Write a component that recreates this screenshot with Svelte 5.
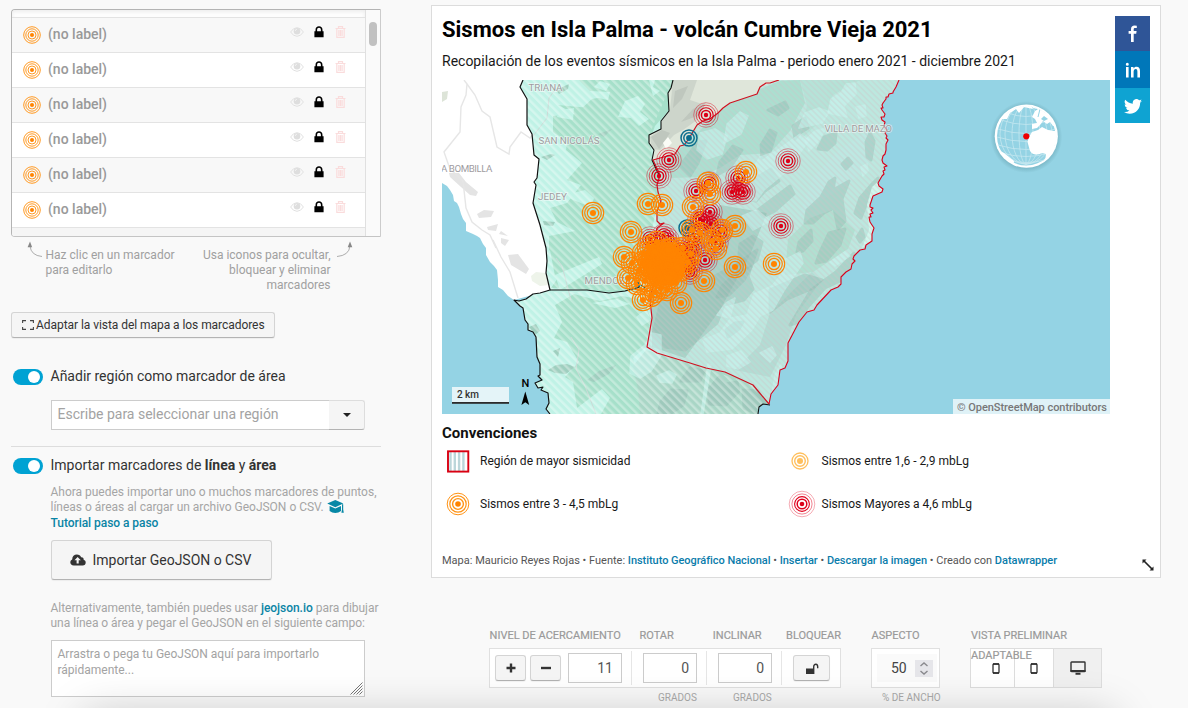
<script>
  const rows = [0, 1, 2, 3, 4, 5];

  const west = 'M523 80L520 87L527 99L527 125L532 134L534 155L539 159L537 178L534 182L536 185L533 203L540 225L546 248L547 261L546 273L550 290';
  const south = 'L540 293L533 294L526 299L519 301L514 300L520 306L523 308L525 320L528 324L528 330L533 332L536 337L537 357L540 364L540 375L538 376L542 380L535 383L538 388L543 387L541 390L548 393L549 403L546 409L550 414';
  const coastEast = '899 80L896 87L893 92L893 93L889 94L888 97L886 97L886 99L883 103L882 105L883 108L881 108L882 110L885 114L884 117L881 117L882 120L885 122L884 126L887 130L885 133L887 136L886 138L888 140L886 144L886 150L885 154L883 156L882 160L883 163L887 166L884 167L885 170L883 171L884 174L882 176L878 183L879 186L883 189L882 192L873 196L870 205L870 207L873 208L871 210L873 213L870 214L871 217L869 217L870 222L874 228L872 234L872 241L866 245L865 249L860 250L854 256L853 259L855 261L852 264L851 269L846 272L841 277L841 284L838 287L831 290L817 305L814 310L807 312L799 322L788 343L788 361L785 368L780 370L778 385L771 394L769 404';
  const fault = 'M779 80L770 83L766 83L760 87L757 94L730 103L723 108L718 113L710 119L703 121L697 125L688 140L684 145L680 146L675 154L660 158L653 160L660 175L657 185L658 192L661 201L657 211L657 221L660 224L664 223L657 228L655 240L660 265L652 290L650 300L652 318L647 347L657 353L690 363L706 368L725 372L753 385L769 404';
  const ridge = 'M673 80L671 88L668 93L669 111L661 121L661 129L649 135L649 143L654 150L652 160L659 175';
  const region = fault + 'L' + coastEast.split('L').reverse().join('L') + 'Z';

  const green = [
    'M576 80L676 80L669 110L655 126L650 140L652 157L660 180L655 215L640 290L610 292L578 289L551 288L560 275L572 270L549 250L549 236L575 231L557 222L550 208L567 203L581 185L567 180L582 163L566 150L567 142L553 132L553 116L575 114L558 105L590 108L604 96L574 91Z',
    'M581 109L592 99L614 95L640 100L643 87L624 82L658 80L660 110L646 128L632 120L625 113L616 118L606 108Z',
    'M555 305L574 294L600 301L622 296L643 300L651 318L646 347L633 358L638 375L620 414L578 414L573 382L565 377L579 362L567 342L554 338L562 322Z',
    'M549 245L560 238L577 248L563 256L592 266L580 275L555 276Z',
    'M628 377L646 365L660 386L654 414L616 414L620 394Z'
  ];
  const mint = [
    'M562 80L579 80L590 91L610 92L608 100L589 96L568 98Z',
    'M625 101L638 96L645 104L640 112L649 119L639 126L631 118L618 117Z',
    'M559 110L574 108L573 120L557 117Z',
    'M565 195L585 190L594 198L591 207L573 200Z',
    'M555 275L599 257L602 264L560 290Z',
    'M594 87L600 81L610 84L606 91Z',
    'M592 303L617 299L630 304L615 308Z',
    'M649 80L655 80L653 87L660 91L653 96Z',
    'M577 408L602 389L610 398L601 414L574 414Z'
  ];
  const hillsLight = [
    'M708 98L721 92L725 102L713 110Z',
    'M700 133L715 129L727 136L722 154L707 159L697 150Z',
    'M727 124L740 112L748 116L741 134L724 143Z',
    'M742 186L760 157L775 152L800 134L809 140L788 170L764 190L756 201L745 200Z',
    'M799 128L805 113L819 108L829 112L822 123Z',
    'M828 113L831 99L841 93L846 84L855 83L856 94L844 106L847 117Z',
    'M856 107L865 105L866 116L859 118Z',
    'M805 140L815 131L826 128L817 143L809 151Z',
    'M861 167L867 164L868 171L863 176Z',
    'M830 262L846 251L850 256L835 266Z',
    'M742 216L757 210L770 221L753 230Z',
    'M703 340L720 333L731 318L747 315L754 294L772 286L784 271L776 264L800 252L803 263L785 289L773 310L760 316L752 330L732 349L707 352Z',
    'M637 317L646 310L650 320L642 325Z',
    'M631 356L645 345L652 333L661 335L661 355L651 371L640 378L630 373Z',
    'M657 376L669 371L676 375L672 383L660 382Z',
    'M727 356L741 351L750 362L738 369L727 366Z',
    'M760 353L772 347L776 355L770 362Z',
    'M717 315L726 303L735 298L730 318Z',
    'M711 365L703 414L701 414L708 364Z',
    'M775 375L781 364L782 382L772 393Z'
  ];
  const hillsDark = [
    'M721 92L735 88L746 91L743 98L728 101L717 105Z',
    'M761 145L770 130L776 133L770 152L762 158Z',
    'M793 126L805 118L808 128L800 133L795 139Z',
    'M680 166L698 142L706 141L698 163L690 176Z',
    'M720 162L733 146L742 150L730 168L717 175Z',
    'M756 178L771 169L779 181L765 191L756 201L747 199Z',
    'M778 195L790 186L794 194L775 211L763 217L758 210Z',
    'M818 149L824 137L836 133L835 143L827 150Z',
    'M866 142L870 133L874 141L871 160L867 157Z',
    'M807 210L821 197L829 182L835 178L833 190L849 181L842 199L845 221L838 229L834 208L824 213L813 223L805 223Z',
    'M799 242L811 230L812 241L803 251L797 252Z',
    'M820 252L829 233L845 229L840 245L826 261L816 263Z',
    'M855 213L860 198L872 184L878 178L875 194L867 202L861 218Z',
    'M857 237L862 229L864 237L860 242Z',
    'M790 325L811 290L836 272L854 253L855 263L840 281L825 288L807 308L799 322Z',
    'M770 290L805 275L822 280L813 288L787 299L770 312Z',
    'M660 305L681 280L706 281L740 262L757 250L748 276L753 289L744 300L724 305L717 323L704 334L685 350L665 347L653 334Z',
    'M740 244L753 236L762 242L757 260L737 276Z',
    'M722 286L736 273L751 267L744 280L729 295L717 297Z',
    'M726 330L735 323L743 322L739 329L728 337Z',
    'M661 402L671 390L687 391L683 405L670 414L658 414Z',
    'M681 381L690 368L704 371L700 381Z',
    'M709 389L719 377L726 384L737 382L739 391L726 405L709 404Z',
    'M743 390L758 391L767 406L758 414L744 408Z',
    'M768 110L785 102L788 108L778 115Z',
    'M842 164L848 158L852 163L846 169Z'
  ];
  const leftHills = [
    'M541 157L551 154L555 155L547 160Z', 'M523 204L532 200L533 206L525 206Z', 'M548 370L556 365L567 364L575 367L566 374L555 373Z',
    'M587 380L599 371L616 365L609 374L594 382Z', 'M553 351L560 348L558 357Z', 'M620 169L626 166L623 170Z',
    'M529 327L536 324L540 331L535 335Z', 'M543 221L555 222L553 226L544 225Z', 'M556 90L569 84L568 89L559 94Z', 'M598 134L612 129L604 137Z'
  ];
  const greys = [
    'M449 173L459 173L466 182L478 192L476 196L470 195L461 187L450 177Z', 'M477 214L484 210L494 211L491 217L479 218Z', 'M487 227L498 224L496 231L488 230Z',
    'M501 238L509 240L505 246L501 243Z', 'M508 255L518 254L529 269L526 274L511 265Z', 'M501 231L508 236L499 234Z'
  ];
  const roads = [
    'M464 80L467 84L466 95L461 107L460 132L452 142L444 152L450 169L463 181L466 208L472 222L482 230L490 235L496 248',
    'M467 84L475 95L482 111L490 117L497 147L509 154L510 147L521 132L530 138L547 118L549 98L554 91',
    'M493 240L501 257L510 272L518 298'
  ];

  const red = [[706,115],[669,160],[659,176],[788,161],[781,226],[696,191],[738,178],[732,192],[739,190],[743,192],[709,184],[710,212],[700,219],[703,221],[711,224],[705,260],[688,265],[690,272],[650,239],[667,240],[695,238],[720,232],[680,250],[716,243],[686,255],[692,248],[664,236]];
  const orange = [[593,213],[631,232],[648,204],[662,205],[746,172],[708,183],[710,194],[693,207],[735,226],[722,230],[692,230],[700,233],[712,241],[774,264],[735,267],[704,281],[681,303],[643,300],[716,249],[624,257],[632,263],[628,278],[643,253],[691,254],[688,262],[683,248],[657,242],[655,292],[661,288],[637,284],[645,281],[651,296],[639,270],[648,247],[673,248],[676,283],[667,290],[643,262],[682,270]];
  for (let i = 0; i < 46; i++) {
    const r = 2.25 * Math.sqrt(i);
    const a = i * 2.399963;
    orange.push([663 + r * Math.cos(a), 264 + r * Math.sin(a)]);
  }
</script>

{#snippet target(x, y)}
  <g transform="translate({x} {y})" fill="none" stroke="#ff8400" stroke-width="1.15">
    <circle r="3" fill="#ff8400" stroke="none" /><circle r="5.7" stroke-width="1.2" /><circle r="8.3" /><circle r="10.7" />
  </g>
{/snippet}
{#snippet redTarget(x, y)}
  <g transform="translate({x} {y})" fill="none" stroke="#dc0018">
    <circle r="2.2" fill="#dc0018" stroke="none" /><circle r="4.6" stroke-width="1.5" /><circle r="7.2" stroke-width="1.1" /><circle r="9.8" stroke-width=".75" opacity=".8" /><circle r="12.3" stroke-width=".6" opacity=".7" />
  </g>
{/snippet}
{#snippet tealTarget(x, y)}
  <g transform="translate({x} {y})" fill="none" stroke="#0b6d8d" stroke-width="1.5">
    <circle r="2.9" fill="#0b6d8d" stroke="none" /><circle r="5.2" /><circle r="8" />
  </g>
{/snippet}
{#snippet unlock()}
  <svg width="14" height="13" viewBox="0 0 14 13"><path d="M1 6.5H8V5C8 2.8 9.1 1.4 10.9 1.4S13.4 2.7 13.4 4.8V6.2H12V4.8C12 3.7 11.7 2.9 10.8 2.9S9.4 3.6 9.4 5V12H1Z" fill="#333" /></svg>
{/snippet}

<div class="page">
  <aside>
    <div class="list">
      <div class="rows">
        <div class="sliver"></div>
        {#each rows as r}
          <div class="row" class:alt={r % 2 === 0}>
            <svg class="dot" width="18" height="18" viewBox="-9 -9 18 18" fill="none" stroke="#ff9a24" stroke-width="1"><circle r="2" fill="#ff8400" stroke="none" /><circle r="4" /><circle r="6.2" /><circle r="8.300" /></svg>
            <span class="name">(no label)</span>
            <svg class="eye" width="14" height="10" viewBox="0 0 14 10"><path d="M.6 5Q3.2 .7 7 .7T13.4 5Q10.8 9.3 7 9.3T.6 5Z" fill="none" stroke="#e0e0e0" /><circle cx="7" cy="4.2" r="3.3" fill="#dedede" /><path d="M5.2 4Q5.4 2.4 7 2.2" stroke="#f8f8f8" fill="none" stroke-width=".7" /></svg>
            <svg class="lock" width="10" height="12" viewBox="0 0 10 12"><path fill-rule="evenodd" d="M.4 5.2H1.5V3.9C1.5 1.5 2.9.3 5 .3S8.5 1.5 8.5 3.9V5.2H9.6V11.2H.4ZM3.1 5.2H6.9V3.9C6.9 2.5 6.2 1.8 5 1.8S3.1 2.5 3.1 3.9Z" fill="#000" /></svg>
            <svg class="trash" width="11" height="12" viewBox="0 0 11 12"><path d="M.5 2.5H10.5M3.5 2V.6H7.5V2M1.8 3V11.3H9.2V3M3.9 4V10M5.5 4V10M7.1 4V10" fill="none" stroke="#fadcdc" stroke-width="1.2" /></svg>
          </div>
        {/each}
        <div class="tail"></div>
      </div>
      <div class="track"><i></i></div>
    </div>

    <div class="hints">
      <svg width="20" height="18" viewBox="0 0 20 18"><path d="M7 5Q8 14.5 19 15.5" fill="none" stroke="#999" stroke-width=".8" /><path d="M7 .5L9.2 6.3H4.6Z" fill="#888" /></svg>
      <p class="h1">Haz clic en un marcador<br />para editarlo</p>
      <p class="h2">Usa iconos para ocultar,<br />bloquear y eliminar<br />marcadores</p>
      <svg class="arr2" width="20" height="18" viewBox="0 0 20 18"><path d="M14 5Q13 14.5 1 15.5" fill="none" stroke="#999" stroke-width=".8" /><path d="M14 .5L16.3 6.3H11.7Z" fill="#888" /></svg>
    </div>

    <button class="fit">
      <svg width="12" height="10" viewBox="0 0 12 10"><path d="M.6 3V.6H4M8 .6H11.4V3M11.4 7V9.4H8M4 9.4H.6V7" fill="none" stroke="#444" stroke-width="1.1" /></svg><span>Adaptar la vista del mapa a los marcadores</span>
    </button>

    <div class="switch s1"><span class="tog"></span><span class="txt">Añadir región como marcador de área</span></div>
    <div class="combo"><div class="field">Escribe para seleccionar una región</div><div class="drop"><i></i></div></div>
    <div class="rule"></div>
    <div class="switch s2"><span class="tog"></span><span class="txt">Importar marcadores de <b>línea</b> y <b>área</b></span></div>

    <p class="note n1"><span>Ahora puedes importar uno o muchos marcadores de puntos,</span><span>líneas o áreas al cargar un archivo GeoJSON o CSV. <svg width="17" height="13" viewBox="0 0 17 13"><path d="M8.3 0L16.3 3.6L8.3 7.2L.2 3.6Z M2.6 6L8.3 8.6L14 6V11Q11.5 13 8.3 13T2.6 11Z M15 4.2H16.2V9.5L16.8 12.8H14.4L15 9.5Z" fill="#0788a6" /></svg></span><b class="l3">Tutorial paso a paso</b></p>
    <button class="import">
      <svg width="16" height="12" viewBox="0 0 16 12"><path fill-rule="evenodd" d="M3.8 11.5C1.6 11.5.3 10.1.3 8.3C.3 6.9 1.1 5.9 2.2 5.4C2.2 2.4 4.2.5 6.9.5C8.9.5 10.5 1.6 11.1 3.2C12.9 3 14 4.4 13.6 5.8C15 6.2 15.7 7.2 15.7 8.5C15.7 10.2 14.5 11.5 12.7 11.5ZM7.6 3.1L4.5 6.3H6.6V9.4H8.7V6.3H10.8Z" fill="#333" /></svg><span>Importar GeoJSON o CSV</span>
    </button>
    <p class="note n2"><span>Alternativamente, también puedes usar <b>jeojson.io</b> para dibujar</span><span>una línea o área y pegar el GeoJSON en el siguiente campo:</span></p>
    <div class="area"><span>Arrastra o pega tu GeoJSON aquí para importarlo</span><span>rápidamente...</span>
      <svg width="13" height="13" viewBox="0 0 13 13"><path d="M.5 12.5L12.5 .5M3.5 12.5L12.5 3.5M6.5 12.5L12.5 6.5M9.5 12.5L12.5 9.5" stroke="#555" stroke-width=".8" /></svg>
    </div>
  </aside>

  <main>
    <section class="card">
      <div class="body">
        <h1><span>Sismos en Isla Palma - volcán Cumbre Vieja 2021</span></h1>
        <p class="intro"><span>Recopilación de los eventos sísmicos en la Isla Palma - periodo enero 2021 - diciembre 2021</span></p>
        <svg class="map" width="668" height="334" viewBox="442 80 668 334">
          <defs>
            <pattern id="hatch" width="5.6" height="5.6" patternUnits="userSpaceOnUse" patternTransform="rotate(-45)"><rect width="2.4" height="5.6" fill="#fff" opacity=".33" /></pattern>
            <pattern id="hatch2" width="4.2" height="4.2" patternUnits="userSpaceOnUse" patternTransform="rotate(-45)"><rect width="1.8" height="4.2" fill="#cfc6c8" opacity=".32" /></pattern>
            <clipPath id="island"><path d={west + south + 'L758 414L759 407L763 404L769 404L' + coastEast.split('L').reverse().join('L') + 'Z'} /></clipPath>
            <clipPath id="zone"><path d={region} /></clipPath>
            <radialGradient id="glow"><stop offset=".8" stop-color="#4b8490" stop-opacity=".45" /><stop offset="1" stop-color="#4b8490" stop-opacity="0" /></radialGradient>
            <clipPath id="disc"><circle cx="1026.3" cy="136.2" r="30" /></clipPath>
          </defs>
          <rect x="442" y="80" width="668" height="334" fill="#94d3e4" />
          <path d="M442 80H560V292L550 290L540 293L514 300L508 296L503 290L498 287V280L497 270L494 266L490 262L486 255V248L483 244L480 238L477 236L473 234L466 231L466 223L463 219L461 214L459 207L457 203L454 201L453 195L450 190L447 186L442 183Z" fill="#fff" />
          {#each greys as d}<path {d} fill="#e4e4e4" />{/each}
          <path d="M442 92L448 91L447 99L442 102Z" fill="#dde4d8" />
          <path d="M531 276L536 272L545 273L549 285L540 286L532 281Z" fill="#eef4ea" />
          <g fill="none" stroke="#e6e6e6" stroke-width="1.4">{#each roads as d}<path {d} />{/each}</g>
          <g clip-path="url(#island)" stroke-linejoin="round">
            <rect x="442" y="80" width="460" height="334" fill="#c0f2e6" />
            {#each green as d}<path {d} fill="#a6e0ca" />{/each}
            {#each mint as d}<path {d} fill="#c0f2e5" />{/each}
            {#each leftHills as d}<path {d} fill="#9fcfbf" />{/each}
            <path d="M646 350L690 363L725 372L753 385L769 404L758 414H640L638 390L633 366Z" fill="#a9d6c6" />
            <path d={region} fill="#bce8df" />
            <path d="M725 103L780 81L800 80L805 103L790 131L770 153L740 155L720 168L700 177L671 178L667 157L690 142L710 119Z" fill="#a6dccb" opacity=".75" />
            <path d="M800 80L860 80L833 95L826 116L800 140L807 105Z" fill="#b0dfd3" opacity=".6" />
            <path d="M652 290L720 205L767 213L750 255L720 310L685 358L652 347Z" fill="#9fcdc0" opacity=".8" />
            <path d="M770 313L812 272L821 281L796 315L786 345L770 377L735 370L760 345Z" fill="#b0d9d1" opacity=".8" />
            <g clip-path="url(#zone)">
              <path d="M813 177L838 151L869 130L875 151L864 172L846 186L811 207L798 218Z" fill="#bde8e2" />
              <path d="M788 239L810 218L832 210L855 230L848 249L813 272L785 275Z" fill="#a9dbc8" opacity=".6" />
            </g>
            {#each hillsDark as d}<path {d} fill="#8fb8ae" stroke="#8fb8ae" stroke-width="3" opacity=".42" />{/each}
            {#each hillsLight as d}<path {d} fill="#c9f4ee" stroke="#c9f4ee" stroke-width="1.500" opacity=".6" />{/each}
            <path d="M872 187L882 178V192L872 197L869 220L874 229L871 241L862 248L869 230L867 205Z" fill="#cff7ed" />
            <g fill="none" stroke="#cbd9d6" stroke-width="1"><path d="M527 144L547 118L549 98L554 91" /><path d="M556 258L562 266L571 300" /><path d="M571 337L579 350L576 369L585 386L596 414" /></g>
            <path d={west + 'L640 290L660 265L655 240L657 211L652 160L649 135L673 80Z'} fill="url(#hatch)" />
            <path d="M514 292H646L652 318L647 347L690 363L753 385L769 414H514Z" fill="url(#hatch)" />
            <path d={region} fill="url(#hatch2)" />
            <path d={ridge.replace('L659 175', '') + 'L660 158L675 154L680 146L688 140L697 125L703 121L718 113L730 103L757 94L760 87L779 80Z'} fill="#dfe6da" />
            <path d="M673 80L697 80L690 100L705 105L697 120L683 130L674 135L660 150L652 149L650 137L661 128L662 120L670 110Z" fill="#b9c0b8" opacity=".45" />
            <path d="M675 91L688 86L682 99L673 108ZM651 137L662 130L670 133L659 149ZM681 122L693 109L706 102L700 115Z" fill="#a9b1a9" opacity=".4" />
            <path d="M663 143L668 137L672 143L666 149Z" fill="#fafcf6" />
          </g>
          <g fill="none" stroke-linejoin="round">
            <path d={west + south} stroke="#111" stroke-width="1.2" />
            <path d="M550 290L570 290L587 290L609 293L625 291L640 287" stroke="#111" stroke-width="1.2" />
            <path d={ridge} stroke="#111" stroke-width="1.1" />
            <path d="M758 414L759 407L763 404L770 405" stroke="#111" stroke-width="1.1" />
            <path d={'M' + coastEast} stroke="#d9001b" stroke-width="1.1" />
            <path d={fault} stroke="#d0101f" stroke-width="1.2" />
          </g>
          <g class="lab">
            <text x="528.5" y="91" textLength="34">TRIANA</text>
            <text x="538.5" y="143.5" textLength="61">SAN NICOLÁS</text>
            <text x="538" y="199.5" textLength="29">JEDEY</text>
            <text x="441" y="172" textLength="51.5">A BOMBILLA</text>
            <text x="584.5" y="284" textLength="47">MENDOZA</text>
            <text x="824.5" y="131.5" textLength="67.5">VILLA DE MAZO</text>
          </g>
          {@render tealTarget(689, 138)}
          {@render tealTarget(687, 228)}
          {#each red as [x, y]}{@render redTarget(x, y)}{/each}
          {#each orange as [x, y]}{@render target(x, y)}{/each}
          <path d="M635 289L641 285L645 288M638 282L640 288" stroke="#0b6d8d" stroke-dasharray="2 1.5" fill="none" />
          <g>
            <circle cx="1026.3" cy="137" r="36" fill="url(#glow)" />
            <circle cx="1026.3" cy="136.2" r="31.6" fill="#fff" />
            <circle cx="1026.3" cy="136.2" r="29.3" fill="#94d3e4" />
            <g clip-path="url(#disc)">
              <g fill="none" stroke="#c4e7f0" stroke-width=".8">
                <ellipse cx="1026" cy="134" rx="7" ry="30" /><ellipse cx="1026" cy="134" rx="14" ry="30" /><ellipse cx="1026" cy="134" rx="21" ry="30" /><ellipse cx="1026" cy="134" rx="26" ry="30" /><path d="M1026 105V167" />
                <path d="M1008 113Q1026 120 1045 113M1001 120Q1026 129 1052 120M998 129Q1026 138 1056 129M997 137Q1026 146 1057 137M998 145Q1026 154 1056 145M1002 153Q1026 160 1050 153M1008 160Q1026 165 1045 160" />
              </g>
              <path d="M998 126L1001 119L1007 119L1010 113L1016 109L1019 113L1024 107L1033 109L1030 104L1012 105L999 114L994 126ZM997 149L1004 153L1014 161L1013 168L1000 159Z" fill="#fff" />
              <path d="M1027.500 142Q1028 137 1032 132L1038 130L1042 127L1048 130L1054 131L1059 130L1058 146L1049 160L1045 161L1046 154L1042 153Q1034 157 1030 151Z" fill="#fff" />
              <path d="M1032 129L1032 124L1037 123L1035 119L1032 117L1035 111L1040 108L1050 114L1056 126L1053 126L1050 122L1047 124L1043 121L1040 125L1037 128Z" fill="#fff" />
              <path d="M1041 119L1044 116L1048 119L1044 121Z" fill="#94d3e4" /><path d="M1040 109L1038 117" stroke="#94d3e4" />
            </g>
            <circle cx="1026.3" cy="136.3" r="3.1" fill="#ee0000" />
          </g>
          <rect x="452" y="387" width="57" height="16" fill="#fff" opacity=".75" /><rect x="452" y="402" width="57" height="1.8" fill="#2b2b2b" />
          <text x="457" y="398" class="scale" textLength="22">2 km</text>
          <text x="521.4" y="387" class="north">N</text>
          <path d="M525.3 391.5L529.2 405L525.3 402.3L521.4 405Z" fill="#000" />
          <rect x="953" y="399" width="157" height="15" fill="#fff" opacity=".7" />
          <text x="957" y="411" class="osm" textLength="150">© OpenStreetMap contributors</text>
        </svg>
        <h2><span>Convenciones</span></h2>
        <div class="legend">
          <div class="item"><svg width="28" height="28" viewBox="-14 -14 28 28"><rect x="-10" y="-9.5" width="20" height="20" fill="#fff" /><path d="M-7.5 -9V10M-3.2 -9V10M1.1 -9V10M5.4 -9V10" stroke="#bcd6da" stroke-width="2.4" /><rect x="-10" y="-9.7" width="20.3" height="20.3" fill="none" stroke="#d90012" stroke-width="1.9" /></svg><span>Región de mayor sismicidad</span></div>
          <div class="item"><svg width="28" height="28" viewBox="-14 -14 28 28" fill="none" stroke="#ffbf5c"><circle r="3" fill="#ffbf5c" stroke="none" /><circle r="5.300" stroke-width="1.400" /><circle r="8" stroke-width="1.300" /></svg><span>Sismos entre 1,6 - 2,9 mbLg</span></div>
          <div class="item"><svg width="28" height="28" viewBox="-14 -14 28 28" fill="none" stroke="#ff9314"><circle r="2.8" fill="#ff8400" stroke="none" /><circle r="5.4" stroke-width="1.4" /><circle r="8.2" stroke-width="1.2" /><circle r="10.8" stroke-width="1" /></svg><span>Sismos entre 3 - 4,5 mbLg</span></div>
          <div class="item wide-ring"><svg width="28" height="28" viewBox="-14 -14 28 28" fill="none" stroke="#e0001c"><circle r="2.3" fill="#dc0018" stroke="none" /><circle r="4.8" stroke-width="1.5" /><circle r="7.4" stroke-width="1.1" /><circle r="10.1" stroke-width=".7" opacity=".7" /><circle r="12.8" stroke-width=".6" opacity=".55" /></svg><span>Sismos Mayores a 4,6 mbLg</span></div>
        </div>
        <p class="foot"><span>Mapa: Mauricio Reyes Rojas • Fuente: <b>Instituto Geográfico Nacional</b> • <b>Insertar</b> • <b>Descargar la imagen</b> • Creado con <b>Datawrapper</b></span></p>
      </div>
      <div class="social">
        <div class="fb"><svg width="10" height="17" viewBox="0 0 10 17"><path d="M3 17V8.7H.6V6H3V4.3C3 1.7 4.4.5 6.5.5L8.8.7V3H7.2C6.1 3 5.7 3.5 5.7 4.4V6H8.6L8.2 8.7H5.7V17Z" fill="#fff" /></svg></div>
        <div class="li"><svg width="16" height="16" viewBox="0 0 16 16"><path d="M1 5H3.600V15.5H1ZM2.300 .7A1.5 1.5 0 1 1 2.300 3.700A1.500 1.500 0 1 1 2.300 .700ZM6 5H8.500V6.4C9.2 5.400 10.200 4.800 11.500 4.800C14.200 4.800 15 6.500 15 9.200V15.500H12.400V9.800C12.400 8.300 12 7.100 10.800 7.100C9.400 7.100 8.600 8.300 8.600 9.800V15.500H6Z" fill="#fff" /></svg></div>
        <div class="tw"><svg width="18" height="15" viewBox="0 0 24 20"><path d="M24 2.4a9.8 9.8 0 0 1-2.8.8A4.9 4.9 0 0 0 23.300 .5a9.900 9.900 0 0 1-3.100 1.200A4.900 4.900 0 0 0 11.800 6.200 14 14 0 0 1 1.700 1a4.900 4.900 0 0 0 1.500 6.600A4.900 4.900 0 0 1 1 7v.1a4.900 4.900 0 0 0 3.900 4.800 4.900 4.900 0 0 1-2.200.1 4.900 4.900 0 0 0 4.600 3.400A9.900 9.900 0 0 1 0 17.400 13.900 13.900 0 0 0 7.500 19.600c9.100 0 14-7.500 14-14V5A10 10 0 0 0 24 2.400Z" fill="#fff" /></svg></div>
      </div>
      <svg class="grip" width="12" height="12" viewBox="0 0 12 12"><path d="M2 2L10 10" stroke="#222" stroke-width="1.700" /><path d="M.5 .5H4.500L.5 4.500ZM11.500 11.500H7.500L11.500 7.500Z" fill="#222" /></svg>
    </section>

    <section class="controls">
      <div class="group">
        <div class="heads"><span class="c1">NIVEL DE ACERCAMIENTO</span><span class="c2">ROTAR</span><span class="c3">INCLINAR</span><span>BLOQUEAR</span></div>
        <div class="panel">
          <div class="cell z"><button class="sq"><svg width="10" height="10" viewBox="0 0 10 10"><path d="M5 .5V9.500M.5 5H9.500" stroke="#333" stroke-width="2.400" /></svg></button><button class="sq"><svg width="10" height="10" viewBox="0 0 10 10"><path d="M0 5H10" stroke="#333" stroke-width="2.400" /></svg></button><div class="num">11</div></div>
          <div class="cell"><div class="num">0</div></div>
          <div class="cell"><div class="num">0</div></div>
          <div class="cell last"><button class="sq wide">{@render unlock()}</button></div>
        </div>
        <div class="units"><span>GRADOS</span><span>GRADOS</span></div>
      </div>
      <div class="group aspect">
        <div class="heads"><span>ASPECTO</span></div>
        <div class="panel"><div class="spin"><span>50</span><div class="arrows"><svg width="18" height="17" viewBox="0 0 18 17"><path d="M5.500 6L9 3L12.500 6M5.500 11L9 14L12.500 11" fill="none" stroke="#8a8a8e" stroke-width="1.400" /></svg></div></div></div>
        <div class="units pct"><span>% DE ANCHO</span></div>
      </div>
      <div class="group preview">
        <div class="panel">
          <div class="dev"><svg width="8" height="11" viewBox="0 0 8 11"><rect x="1" y="1" width="6" height="9" rx=".8" fill="none" stroke="#222" stroke-width="1.200" /><path d="M1 1H7M1 10H7" stroke="#222" stroke-width="1.500" /></svg></div>
          <div class="dev m"><svg width="8" height="11" viewBox="0 0 8 11"><rect x="1" y="1" width="6" height="9" rx=".8" fill="none" stroke="#222" stroke-width="1.200" /><path d="M1 1H7M1 10H7" stroke="#222" stroke-width="1.500" /></svg></div>
          <div class="dev on"><svg width="16" height="14" viewBox="0 0 16 14"><rect x="1" y="1" width="14" height="9.500" rx=".6" fill="none" stroke="#333" stroke-width="1.400" /><path d="M.5 10H15.500M5.500 12.700H10.500" stroke="#333" stroke-width="1.900" /></svg></div>
        </div>
        <div class="over"><span>VISTA PRELIMINAR</span><span>ADAPTABLE</span></div>
      </div>
    </section>
  </main>
  <div class="shade"></div>
</div>

<style>
  :global(body) { margin: 0; background: #f9f9f9; overflow: hidden; }
  .page { position: relative; width: 1188px; height: 708px; overflow: hidden; display: flex; background: #f9f9f9; font-family: Roboto, "Liberation Sans", sans-serif; color: #333; box-sizing: border-box; }
  .page :global(*) { box-sizing: border-box; }
  p, h1, h2 { margin: 0; font-weight: 400; }
  svg { display: block; flex: none; }
  span { white-space: nowrap; }
  button { font: inherit; color: #333; padding: 0; margin: 0; display: flex; align-items: center; background: #f5f5f5; border: 1px solid #d4d4d4; border-bottom-color: #b3b3b3; border-radius: 3px; box-shadow: 0 1px 1px rgba(0,0,0,.05); }
  aside { width: 370px; margin-left: 11px; padding-top: 9px; flex: none; }

  .list { height: 228px; border: 1px solid #b4b4b4; border-bottom-color: #c4c4c4; border-right-color: #ccc; border-radius: 4px 0 0 4px; display: flex; overflow: hidden; box-shadow: inset 0 0 5px rgba(0,0,0,.1); }
  .rows { width: 354px; border-right: 1px solid #e0e0e0; background: #fff; overflow: hidden; }
  .sliver { height: 7px; box-shadow: inset 0 2px 4px rgba(0,0,0,.08); }
  .row { height: 35px; border-top: 1px solid #e3e3e3; display: flex; align-items: center; padding: 0 0 2px 11px; background: #fff; }
  .row.alt { background: #f8f8f8; }
  .dot { position: relative; top: .5px; }
  .name { font-size: 14px; margin-left: 7px; width: 242px; color: #999; font-weight: 500; }
  .eye, .lock, .trash { position: relative; top: -2px; }
  .lock { margin-left: 10px; } .trash { margin-left: 11px; }
  .tail { height: 12px; border-top: 1px solid #e3e3e3; background: #f5f5f5; }
  .track { flex: 1; padding: 12px 0 0 3px; background: #fafafa; }
  .track i { display: block; width: 8px; height: 24px; border-radius: 4px; background: #c1c1c1; }

  .hints { display: flex; height: 75px; padding: 4px 0 0 12px; font-size: 12px; line-height: 15px; color: #a0a0a0; }
  .hints p { padding-top: 7px; white-space: nowrap; }
  .h1 { width: 151px; margin-left: 2.500px; }
  .h2 { text-align: right; width: 134px; }
  .arr2 { margin-left: 5px; }

  .fit { width: 264px; height: 26px; padding-left: 9.500px; font-size: 12px; gap: 2.500px; letter-spacing: -.055px; }
  .switch { display: flex; align-items: center; height: 16px; padding-left: 2px; font-size: 14px; gap: 7.500px; }
  .s1 { margin-top: 31px; } .s2 { margin-top: 11px; }
  .txt { padding-bottom: 2px; }
  .tog { width: 30px; height: 16px; border-radius: 8px; background: #00a2d3; padding: 2px; flex: none; }
  .tog::after { content: ""; display: block; width: 12px; height: 12px; border-radius: 50%; background: #fff; margin-left: 13px; }
  .combo { margin: 15px 0 0 40px; width: 314px; height: 30px; display: flex; }
  .field { flex: 1; border: 1px solid #ccc; border-right: 0; background: #fff; color: #a3a3a3; font-size: 14px; line-height: 27px; padding-left: 5.500px; }
  .drop { width: 36px; background: #f5f5f5; border: 1px solid #ddd; border-left: 0; border-bottom-color: #b3b3b3; border-radius: 0 3px 3px 0; display: flex; align-items: center; justify-content: center; }
  .drop i { border: 4px solid transparent; border-top-color: #222; border-bottom: 0; }
  .rule { height: 1px; background: #ddd; margin-top: 16px; }
  .note { margin-left: 39.500px; font-size: 12px; line-height: 15px; color: #a5a5a5; letter-spacing: -.012px; }
  .note span, .note b { white-space: nowrap; }
  .note > span { display: flex; }
  .note > span b { margin: 0 3px; }
  .note b { color: #0a84a5; font-weight: 500; display: block; }
  .note svg { margin: 0 0 0 3px; }
  .n1 { margin-top: 11px; height: 55px; } .n1 .l3 { padding-top: 1px; letter-spacing: -.05px; }
  .import { width: 221px; height: 40px; margin-left: 40px; padding-left: 18px; gap: 6.500px; font-size: 14px; letter-spacing: -.02px; }
  .n2 { margin-top: 21px; letter-spacing: -.03px; }
  .area { margin: 9px 0 0 40px; width: 314px; height: 57px; border: 1px solid #ccc; background: #fff; font-size: 12px; line-height: 16px; color: #a3a3a3; padding: 5px 0 0 5.500px; position: relative; display: flex; flex-direction: column; align-items: flex-start; }
  .area svg { position: absolute; right: 1px; bottom: 1px; }

  main { margin-left: 50px; width: 730px; padding-top: 5px; flex: none; }
  .card { position: relative; height: 573px; background: #fff; border: 1px solid #dcdcdc; padding: 10px; display: flex; gap: 5px; }
  .body { width: 668px; color: #181818; }
  h1 { font-size: 22px; font-weight: 700; line-height: 28px; height: 33px; color: #000; }
  .intro { font-size: 14px; line-height: 24px; height: 31px; }
  .map { overflow: hidden; }
  .lab text { font-size: 9.800px; fill: #a09c9f; stroke: #fff; stroke-opacity: .55; stroke-width: 1.600px; paint-order: stroke; }
  .scale { font-size: 10px; font-weight: 500; fill: #333; }
  .north { font-size: 11px; font-weight: 500; }
  .osm { font-size: 11px; font-weight: 500; fill: #777; }
  h2 { font-size: 15px; font-weight: 700; line-height: 18px; margin-top: 10px; height: 23px; color: #111; }
  .legend { display: grid; grid-template-columns: 341.500px 1fr; grid-template-rows: 28px 28px; row-gap: 15px; padding-left: 2px; font-size: 12px; }
  .item { display: flex; align-items: center; gap: 8px; }
  .wide-ring svg { margin: 0 -2.500px 0 2.500px; }
  .foot { margin-top: 34px; font-size: 11px; line-height: 18px; color: #555; }
  .foot b { font-weight: 500; color: #0a7cab; letter-spacing: -.045px; }
  .social { width: 35px; }
  .social div { display: flex; align-items: center; justify-content: center; height: 35px; background: #2f5597; }
  .social .li { height: 37px; background: #0077b9; } .social .tw { background: #0fa3d2; padding-top: 1px; }
  .grip { position: absolute; right: 6px; bottom: 6px; }

  .controls { display: flex; margin-top: 51px; padding-left: 58px; color: #9a9a9a; font-size: 11px; }
  .heads { display: flex; height: 19px; line-height: 13px; white-space: nowrap; padding-left: .6px; -webkit-text-stroke: .2px #9a9a9a; }
  .c1 { width: 153.400px; } .c2 { width: 75px; } .c3 { width: 75px; }
  .panel { height: 40px; border: 1px solid #e0e0e0; background: #fff; display: flex; align-items: center; }
  .group { flex: none; }
  .group:first-child { width: 352px; }
  .cell { height: 34px; border-right: 1px solid #e6e6e6; display: flex; align-items: center; width: 75px; padding-left: 11px; gap: 4px; flex: none; }
  .cell.z { width: 142px; padding-left: 5px; } .cell.last { border: 0; width: 58px; }
  .sq { width: 31px; height: 26px; justify-content: center; flex: none; } .wide { width: 37px; }
  .num { width: 54px; height: 30px; border: 1px solid #ccc; text-align: right; padding-right: 7px; line-height: 28px; font-size: 14px; color: #555; flex: none; }
  .z .num { margin-left: 3px; padding-right: 8px; }
  .units { display: flex; padding-left: 169px; gap: 36px; font-size: 10px; line-height: 12px; margin-top: 4px; color: #aaa; }
  .aspect { margin-left: 30px; width: 70px; }
  .aspect .panel { width: 69px; padding-left: 5px; }
  .spin { display: flex; align-items: center; width: 60px; height: 28px; background: #fafafa; font-size: 14px; color: #444; padding-left: 14px; gap: 8px; }
  .arrows { background: #e6e6ea; }
  .units.pct { padding-left: 11px; }
  .preview { position: relative; margin-left: 29px; padding-top: 19px; }
  .preview .panel { width: 132px; border-color: #ddd; }
  .dev { width: 44px; height: 38px; border-right: 1px solid #ddd; display: flex; align-items: center; justify-content: center; padding: 0 0 0 6px; }
  .dev.m { width: 39px; padding: 0; } .on { flex: 1; background: #f0f0f0; border: 0; padding: 0; }
  .over { position: absolute; left: 1px; top: -3px; line-height: 20px; display: flex; flex-direction: column; align-items: flex-start; -webkit-text-stroke: .2px #9a9a9a; }
  .shade { position: absolute; left: 90px; right: 80px; top: 722px; height: 40px; box-shadow: 0 0 46px 6px rgba(0,0,0,.22); }
</style>
